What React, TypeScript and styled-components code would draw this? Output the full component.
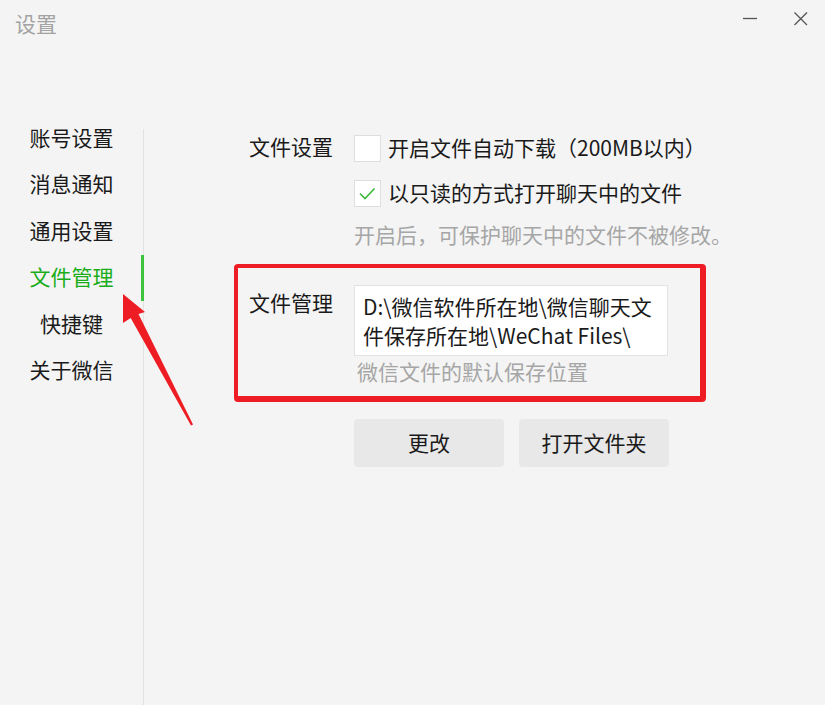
import React from 'react';
import styled, { createGlobalStyle } from 'styled-components';

const GlobalStyle = createGlobalStyle`
  html, body { margin: 0; padding: 0; background: #f4f4f4; }
  body { font-family: "Noto Sans CJK SC", "Noto Sans", sans-serif; color: #1a1a1a; }
  * { box-sizing: border-box; }
`;

const Window = styled.div`
  position: relative;
  width: 825px;
  height: 705px;
  overflow: hidden;
  display: flex;
  flex-direction: column;
  background: #f4f4f4;
`;

const TitleBar = styled.header`
  display: flex;
  justify-content: space-between;
  height: 48px;
  padding: 0 17px 0 15px;
`;

const Title = styled.div`
  font-size: 21px;
  line-height: 46px;
  color: #a3a3a3;
`;

const Controls = styled.div`
  display: flex;
  gap: 37px;
  padding-top: 12px;
`;

const CtrlButton = styled.button`
  width: 14px;
  height: 14px;
  padding: 0;
  border: 0;
  background: none;
  display: block;
  color: #555;
`;

const Body = styled.div`
  display: flex;
  flex: 1;
  margin-top: 66px;
`;

const Sidebar = styled.nav`
  display: flex;
`;

const NavList = styled.ul`
  list-style: none;
  margin: 0;
  padding: 0;
  width: 143px;
`;

const NavItem = styled.li<{ $active?: boolean }>`
  position: relative;
  height: 46.4px;
  line-height: 46.4px;
  text-align: center;
  font-size: 21px;
  color: ${(p) => (p.$active ? '#1aad19' : '#1a1a1a')};
  &::after {
    content: '';
    display: ${(p) => (p.$active ? 'block' : 'none')};
    position: absolute;
    right: -1px;
    top: 2px;
    width: 3px;
    height: 46px;
    background: #3cc43c;
  }
`;

const Divider = styled.div`
  width: 1px;
  margin-top: 15px;
  background: #e2e2e2;
`;

const Content = styled.main`
  flex: 1;
  margin-left: 90px;
  padding-top: 21px;
  display: flex;
  flex-direction: column;
`;

const FieldRow = styled.section`
  display: flex;
  padding-left: 15px;
`;

const FieldLabel = styled.div<{ $offset?: number }>`
  width: 105px;
  flex: none;
  font-size: 21px;
  line-height: ${(p) => (p.$offset !== undefined ? '30px' : '27px')};
  margin-top: ${(p) => p.$offset ?? -2}px;
`;

const ControlsCol = styled.div`
  display: flex;
  flex-direction: column;
`;

const CheckRow = styled.label<{ $gapTop?: number }>`
  display: flex;
  align-items: center;
  gap: 7px;
  height: 27px;
  font-size: 21px;
  line-height: 27px;
  margin-top: ${(p) => p.$gapTop ?? 0}px;
  white-space: nowrap;
`;

const CheckText = styled.span`
  position: relative;
  top: -1px;
`;

const Box = styled.span`
  width: 27px;
  height: 27px;
  flex: none;
  background: #fff;
  border: 1px solid #dedede;
  display: flex;
  align-items: center;
  justify-content: center;
`;

const Hint = styled.div<{ $gapTop: number }>`
  margin-top: ${(p) => p.$gapTop}px;
  font-size: 21px;
  line-height: 30px;
  color: #a6a6a6;
  white-space: nowrap;
`;

const Highlight = styled.section`
  margin-top: 15px;
  width: 472px;
  display: flex;
  border: 4px solid #ee1c25;
  border-right-width: 6px;
  border-bottom-width: 6px;
  border-radius: 4px;
  padding: 17px 0 11px 11px;
`;

const PathBox = styled.div`
  width: 314px;
  background: #fff;
  border: 1px solid #e3e3e3;
  padding: 6px 8px 5px;
  font-size: 21px;
  line-height: 29px;
  white-space: pre-line;
`;

const SubHint = styled.div`
  margin-top: 1px;
  padding-left: 3px;
  font-size: 21px;
  line-height: 28px;
  color: #a6a6a6;
`;

const ButtonRow = styled.div`
  display: flex;
  gap: 15px;
  margin-top: 17px;
  padding-left: 120px;
`;

const ActionButton = styled.button`
  width: 150px;
  height: 48px;
  border: 0;
  border-radius: 4px;
  background: #e8e8e8;
  font-family: inherit;
  font-size: 21px;
  line-height: 46px;
  color: #1a1a1a;
  padding: 0 0 2px;
`;

const ArrowLayer = styled.svg`
  position: absolute;
  left: 0;
  top: 0;
  pointer-events: none;
`;

const navItems = ['账号设置', '消息通知', '通用设置', '文件管理', '快捷键', '关于微信'];

export default function App() {
  return (
    <>
      <GlobalStyle />
      <Window>
        <TitleBar>
          <Title>设置</Title>
          <Controls>
            <CtrlButton aria-label="minimize">
              <svg width="14" height="14" viewBox="0 0 14 14">
                <line x1="0" y1="6.5" x2="14" y2="6.5" stroke="#555" strokeWidth="1.3" />
              </svg>
            </CtrlButton>
            <CtrlButton aria-label="close">
              <svg width="14" height="14" viewBox="0 0 14 14">
                <path d="M0.5 0.5 L13 13 M13 0.5 L0.5 13" stroke="#555" strokeWidth="1.3" fill="none" />
              </svg>
            </CtrlButton>
          </Controls>
        </TitleBar>
        <Body>
          <Sidebar>
            <NavList>
              {navItems.map((n) => (
                <NavItem key={n} $active={n === '文件管理'}>
                  {n}
                </NavItem>
              ))}
            </NavList>
            <Divider />
          </Sidebar>
          <Content>
            <FieldRow>
              <FieldLabel>文件设置</FieldLabel>
              <ControlsCol>
                <CheckRow>
                  <Box />
                  <CheckText>开启文件自动下载（200MB以内）</CheckText>
                </CheckRow>
                <CheckRow $gapTop={18}>
                  <Box>
                    <svg width="25" height="25" viewBox="0 0 25 25">
                      <polyline points="5,12.5 10,17.5 19.5,7.5" fill="none" stroke="#3cb93c" strokeWidth="1.6" />
                    </svg>
                  </Box>
                  <CheckText>以只读的方式打开聊天中的文件</CheckText>
                </CheckRow>
                <Hint $gapTop={12}>开启后，可保护聊天中的文件不被修改。</Hint>
              </ControlsCol>
            </FieldRow>
            <Highlight>
              <FieldLabel $offset={2}>文件管理</FieldLabel>
              <ControlsCol>
                <PathBox>{'D:\\微信软件所在地\\微信聊天文\n件保存所在地\\WeChat Files\\'}</PathBox>
                <SubHint>微信文件的默认保存位置</SubHint>
              </ControlsCol>
            </Highlight>
            <ButtonRow>
              <ActionButton>更改</ActionButton>
              <ActionButton>打开文件夹</ActionButton>
            </ButtonRow>
          </Content>
        </Body>
        <ArrowLayer width="825" height="705" viewBox="0 0 825 705">
          <polygon
            points="123,294 145,312 138.5,314 193,424.5 191,425.5 130.7,318 123,323"
            fill="#ee1d24"
          />
        </ArrowLayer>
      </Window>
    </>
  );
}
